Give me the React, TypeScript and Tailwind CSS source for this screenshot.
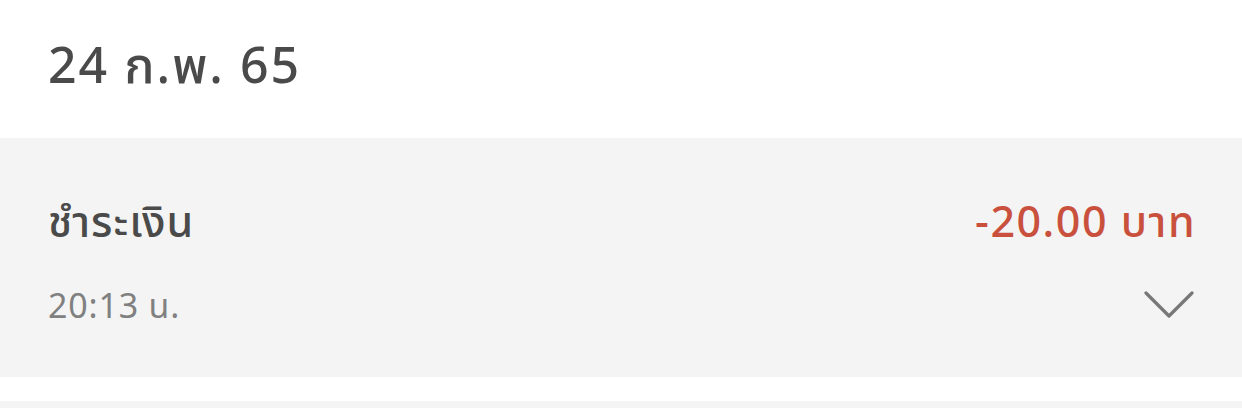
import React from "react";

const font = { fontFamily: '"Noto Sans", "Noto Sans Thai", sans-serif' };

const Chevron: React.FC = () => (
  <svg width="50" height="28" viewBox="0 0 50 28" fill="none">
    <path d="M2 2 L25 25 L48 2" stroke="#777777" strokeWidth="3.2" strokeLinecap="round" strokeLinejoin="round" />
  </svg>
);

export default function App() {
  return (
    <div className="w-[1242px] h-[408px] bg-white overflow-hidden" style={font}>
      <div className="h-[138px] flex items-center pl-[48px] pb-[10px]">
        <h2 className="text-[50px] font-medium tracking-[2px] text-[#4a4a4a] leading-none">24 ก.พ. 65</h2>
      </div>
      <div className="h-[239px] bg-[#f4f4f4] px-[48px] pt-[60px]">
        <div className="flex items-center justify-between h-[44px]">
          <span className="text-[43px] font-medium tracking-[1px] text-[#4a4a4a] leading-none">ชำระเงิน</span>
          <span className="text-[43px] font-medium tracking-[1.5px] text-[#c9503d] leading-none -mr-[2px]">-20.00 บาท</span>
        </div>
        <div className="flex items-center justify-between mt-[48px] h-[30px]">
          <span className="text-[34px] tracking-[0.8px] text-[#808080] leading-none">20:13 น.</span>
          <Chevron />
        </div>
      </div>
      <div className="h-[24px] bg-white" />
      <div className="h-[40px] bg-[#f4f4f4]" />
    </div>
  );
}
